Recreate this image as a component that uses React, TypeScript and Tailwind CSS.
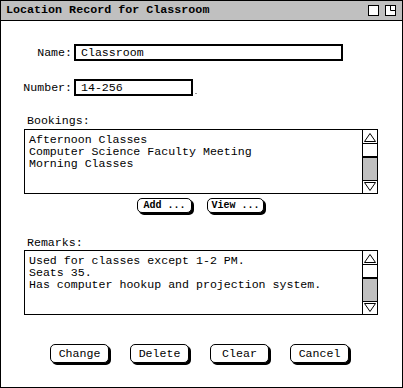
const mono = "font-['Liberation_Mono','Courier_New',monospace]";

const UpArrow = () => (
  <svg width="14" height="12" viewBox="0 0 14 12" className="block">
    <path d="M7 2.5 L12.5 10.5 L1.5 10.5 Z" fill="white" stroke="black" strokeWidth="1" />
  </svg>
);

const DownArrow = () => (
  <svg width="14" height="12" viewBox="0 0 14 12" className="block">
    <path d="M1.5 1.5 L12.5 1.5 L7 9.5 Z" fill="white" stroke="black" strokeWidth="1" />
  </svg>
);

const ScrollBox = ({ lines }: { lines: string[] }) => (
  <div className="ml-[23px] flex h-[65px] w-[354px] border border-black bg-white">
    <div className={`flex-1 pl-[4px] pt-[4px] text-[11.6px] leading-[12px] ${mono}`}>
      {lines.map((l) => (
        <div key={l} className="whitespace-pre">
          {l}
        </div>
      ))}
    </div>
    <div className="flex w-[15px] flex-col border-l border-black">
      <div className="flex h-[14px] items-center justify-center border-b border-black bg-white">
        <UpArrow />
      </div>
      <div className="h-[14px] border-b-2 border-black bg-white" />
      <div className="flex-1 bg-[#c0c0c0]" />
      <div className="flex h-[13px] items-center justify-center border-t border-black bg-white">
        <DownArrow />
      </div>
    </div>
  </div>
);

const Btn = ({ label, w, h, small }: { label: string; w: string; h: string; small?: boolean }) => (
  <button
    className={`${w} ${h} flex items-center justify-center rounded-[5px] border border-black bg-white shadow-[2px_2px_0_0_#000] ${mono} ${
      small ? "text-[10px] font-bold" : "text-[11.6px]"
    } leading-none text-black`}
  >
    {label}
  </button>
);

export default function App() {
  return (
    <div className="flex h-[388px] w-[403px] flex-col border border-black bg-white text-black">
      <div className="flex h-[20px] items-center border-b border-black bg-[#c0c0c0] pl-[5px] pr-[5px]">
        <span className={`flex-1 text-[11.7px] font-bold ${mono}`}>Location Record for Classroom</span>
        <svg width="30" height="12" viewBox="0 0 30 12" className="block">
          <rect x="1.5" y="0.5" width="10" height="10" fill="white" stroke="black" />
          <rect x="18.5" y="0.5" width="10" height="10" fill="white" stroke="black" />
          <path d="M23.5 0.5 V5.5 H28.5" fill="none" stroke="black" />
        </svg>
      </div>

      <div className={`flex flex-col pt-[23px] text-[11.6px] leading-[13px] ${mono}`}>
        <div className="flex h-[17px] items-center">
          <span className="w-[71px] text-right">Name:</span>
          <div className="ml-[2px] flex h-[17px] w-[269px] items-center border-2 border-black pl-[5px] leading-none">
            Classroom
          </div>
        </div>

        <div className="mt-[18px] flex h-[17px] items-center">
          <span className="w-[71px] text-right">Number:</span>
          <div className="ml-[2px] flex h-[17px] w-[119px] items-center border-2 border-black pl-[5px] leading-none">
            14-256
          </div>
          <div className="ml-[2px] mt-[12px] h-[1px] w-[2px] bg-[#999]" />
        </div>

        <div className="ml-[26px] mt-[18px] h-[13px] leading-[13px]">Bookings:</div>
        <div className="mt-[2px]">
          <ScrollBox lines={["Afternoon Classes", "Computer Science Faculty Meeting", "Morning Classes"]} />
        </div>

        <div className="mt-[4px] flex justify-center gap-[15px] pr-[2px]">
          <Btn label="Add ..." w="w-[55px]" h="h-[15px]" small />
          <Btn label="View ..." w="w-[57px]" h="h-[15px]" small />
        </div>

        <div className="ml-[26px] mt-[23px] h-[13px] leading-[13px]">Remarks:</div>
        <div className="mt-[1px]">
          <ScrollBox
            lines={[
              "Used for classes except 1-2 PM.",
              "Seats 35.",
              "Has computer hookup and projection system.",
            ]}
          />
        </div>

        <div className="mt-[29px] flex justify-center gap-[21px] pr-[4px]">
          <Btn label="Change" w="w-[59px]" h="h-[19px]" />
          <Btn label="Delete" w="w-[59px]" h="h-[19px]" />
          <Btn label="Clear" w="w-[59px]" h="h-[19px]" />
          <Btn label="Cancel" w="w-[59px]" h="h-[19px]" />
        </div>
      </div>
    </div>
  );
}
